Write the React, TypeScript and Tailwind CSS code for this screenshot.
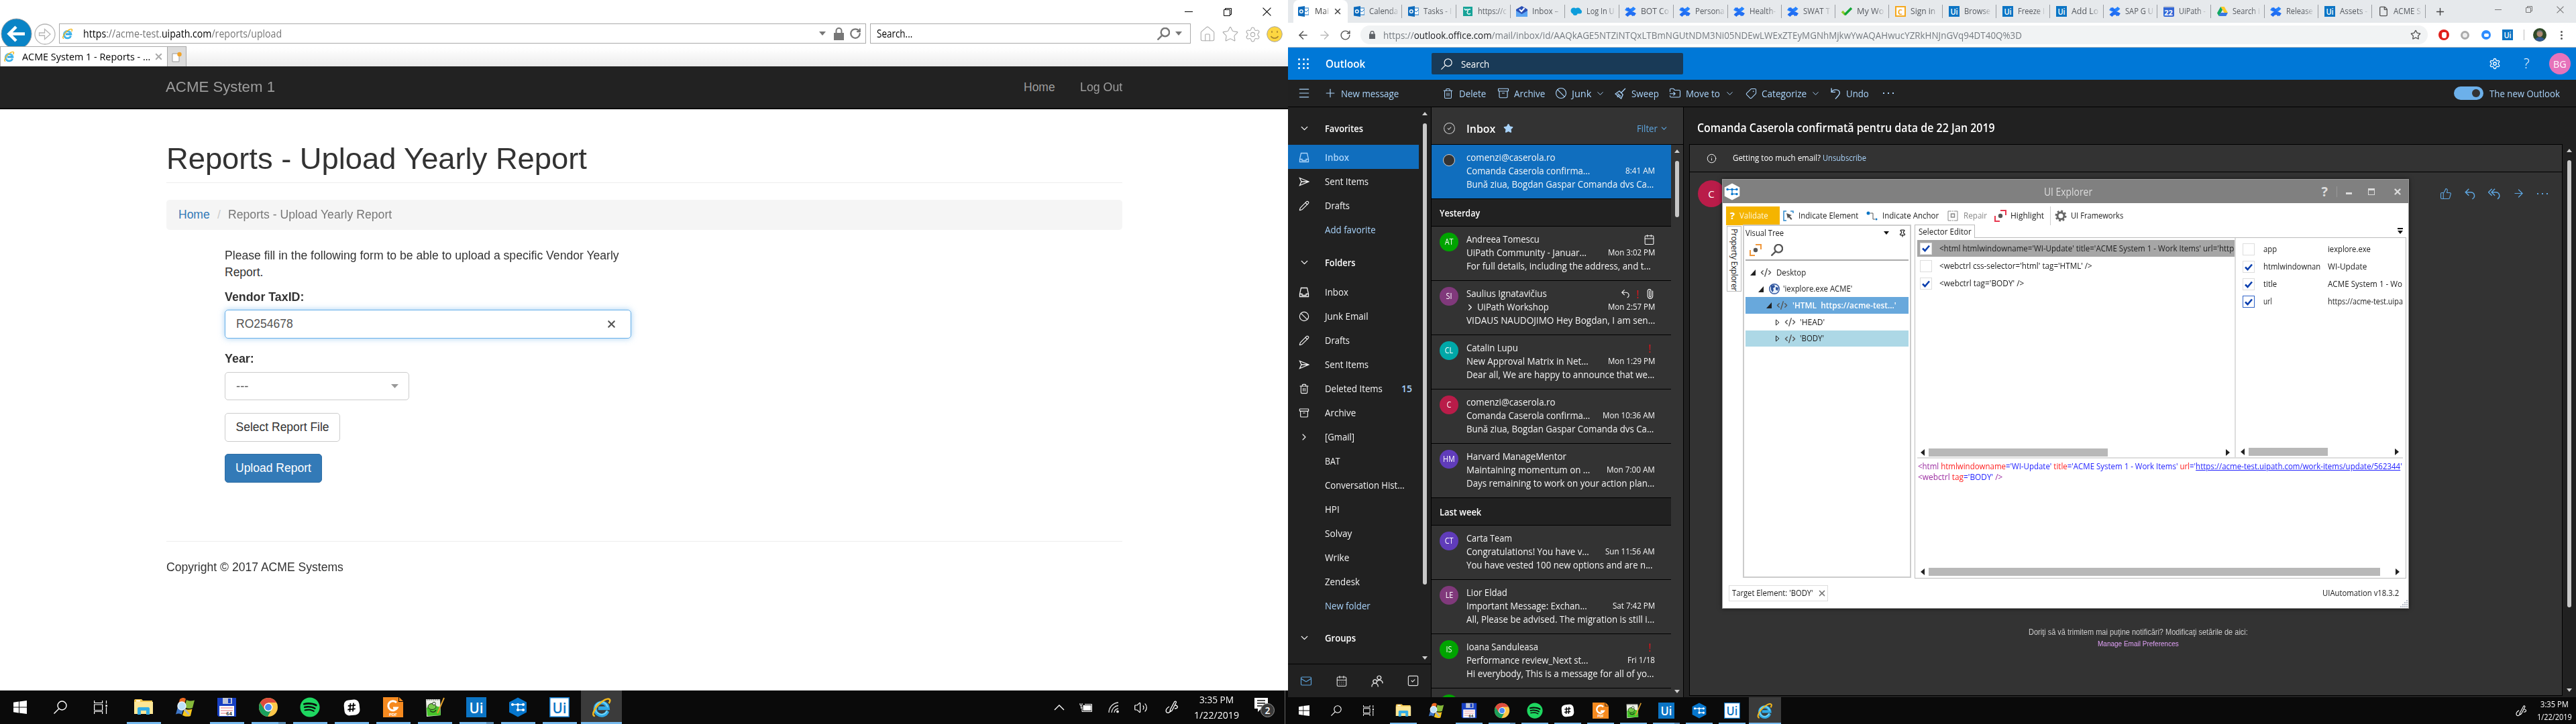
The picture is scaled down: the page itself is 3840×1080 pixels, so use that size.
import React, { useLayoutEffect, useRef, useState } from "react";
import {
  Settings, Archive, Ban, Trash2, ChevronDown, ChevronRight, Pencil,
  Star, RotateCw, ArrowLeft, ArrowRight, Plus, X, Menu, ThumbsUp, Tag,
  Calendar, CalendarDays, SquareCheck, Mail, Paperclip, Info, File, Volume2, CircleCheck,
  FolderInput, CodeXml, House, Pin,
} from "lucide-react";
import { FaSpotify, FaHashtag } from "react-icons/fa";

/* Text squeezed or stretched horizontally to an exact width. */
function Fit({ w, className = "", children }: { w: number; className?: string; children: React.ReactNode }) {
  const ref = useRef<HTMLSpanElement>(null);
  const [k, setK] = useState(1);
  useLayoutEffect(() => {
    if (ref.current) setK(w / ref.current.offsetWidth);
  }, [w]);
  return (
    <span className={"inline-block shrink-0 whitespace-pre " + className} style={{ width: w }}>
      <span ref={ref} className="inline-block origin-left whitespace-pre" style={{ transform: `scaleX(${k})` }}>
        {children}
      </span>
    </span>
  );
}

/* ---------- logos ---------- */
type S = { s: number };

const IELogo = ({ s }: S) => (
  <svg width={s} height={s} viewBox="0 0 32 32" fill="none" className="shrink-0">
    <path d="M25.5 21.5A9.8 9.8 0 1 1 26 17H11" stroke="#2fa9e6" strokeWidth="5.500" />
    <path d="M25 20.5A9.5 9.5 0 1 1 25.5 15.5" stroke="#7fdcfa" strokeWidth="1.600" />
    <path d="M6 29C1 29 3.500 20 10 13C17 5 27 0 29 4c.8 1.600-.2 3.500-1.500 5.500" stroke="#f3b81c" strokeWidth="2.600" />
  </svg>
);
const Windows = ({ s }: S) => (
  <svg width={s} height={s} viewBox="0 0 20 20" fill="#fff">
    <path d="M0 2.700 8 1.600V9.500H0zM9 1.400 20 0V9.500H9zM0 10.500H8V18.400L0 17.300zM9 10.500H20V20L9 18.600z" />
  </svg>
);
const Magnify = ({ s, c = "#fff", w = 1.4 }: { s: number; c?: string; w?: number }) => (
  <svg width={s} height={s} viewBox="0 0 20 20" fill="none" stroke={c} strokeWidth={w}>
    <circle cx="12.500" cy="7.500" r="6.500" />
    <path d="M8 12 .5 19.500" />
  </svg>
);
const TaskView = ({ s }: S) => (
  <svg width={s} height={s} viewBox="0 0 20 20" fill="none" stroke="#fff" strokeWidth="1.200">
    <path d="M.6 0v3.500h12V0M.6 6h12v8.500H.6zM.6 20v-3.500h12V20M18.500 0v4.500M18.500 10v10" />
    <rect x="17.300" y="6.500" width="2.600" height="2.600" fill="#fff" stroke="none" />
  </svg>
);
const Explorer = ({ s }: S) => (
  <svg width={s} height={s} viewBox="0 0 30 30">
    <path d="M1 5c0-1 .5-2 2-2h9l2 2h14v20H1z" fill="#f6c64c" />
    <path d="M1 7h28v18H1z" fill="#ffe796" />
    <path d="M4 4.500h6v2H4z" fill="#fff" />
    <path d="M6 26V17c0-1 .6-2 2-2h14c1.400 0 2 1 2 2v9h-5v-6h-8v6z" fill="#35aee6" />
  </svg>
);
const WinSearch = ({ s }: S) => (
  <svg width={s} height={s} viewBox="0 0 30 30">
    <path d="M7 3c4-3 7-2 9-.5L13 14c-3-1.500-6-2-9 0z" fill="#ee6a22" />
    <path d="M17 4c4 2 8 2 12 .5L26 16c-4 1.500-8 1-12-.5z" fill="#86b93a" />
    <path d="M4 15c3-2 6-1.500 9 0l-3 11c-3-2-6-2-9-.5z" fill="#3f77c8" />
    <path d="M14 17c4 2 8 2 11.500.5L23 28c-4 1.500-8 1-12-1z" fill="#f7c71c" />
    <circle cx="10" cy="13" r="6" fill="#bfe2fa" stroke="#e9f4fd" strokeWidth="1.500" />
    <path d="m14 18 7 8" stroke="#aab4bd" strokeWidth="3" />
  </svg>
);
const Floppy = ({ s }: S) => (
  <svg width={s} height={s} viewBox="0 0 30 30">
    <path d="M1 1h28v28H3l-2-2z" fill="#1740c4" />
    <path d="M9 1h14v9H9z" fill="#bfc6d6" />
    <path d="M17 2h4v7h-4z" fill="#1740c4" />
    <path d="M4 13h22v15H4z" fill="#fff" />
    <path d="M6 16h18M6 20h18M6 24h8" stroke="#f1b9bd" strokeWidth="2" />
    <text x="14" y="27" fontSize="7.500" fontWeight="700" fontFamily="Liberation Mono, monospace" fill="#222">64</text>
  </svg>
);
const Chrome = ({ s }: S) => (
  <svg width={s} height={s} viewBox="0 0 30 30">
    <circle cx="15" cy="15" r="14" fill="#fdc84a" />
    <path d="M15 15 2.900 8A14 14 0 0 1 27.100 8H15z" fill="#dd4b3e" />
    <path d="M2.900 8A14 14 0 0 0 14 29l6-11-5 3-6-3z" fill="#1a9f5c" />
    <path d="M2.900 8 9 18l3-9z" fill="#dd4b3e" />
    <circle cx="15" cy="15" r="6.400" fill="#fff" />
    <circle cx="15" cy="15" r="5" fill="#4a8af4" />
  </svg>
);
const Slack = ({ s }: S) => (
  <div className="flex h-[75%] w-[75%] -rotate-6 items-center justify-center rounded-[32%] bg-white text-black">
    <FaHashtag size={s * 0.48} />
  </div>
);
const Foxit = ({ s }: S) => (
  <svg width={s} height={s} viewBox="0 0 30 30">
    <path d="M0 0h23v7h7v23H0z" fill="#f68a1f" />
    <path d="M24 0l6 6h-6z" fill="#f68a1f" />
    <path d="M20 8a7 7 0 1 0 1 8h-6" fill="none" stroke="#fff" strokeWidth="3" />
    <text x="15" y="27.500" fontSize="6" fontWeight="700" textAnchor="middle" fontFamily="Liberation Sans, sans-serif" fill="#fff">PDF</text>
  </svg>
);
const Notepad = ({ s }: S) => (
  <svg width={s} height={s} viewBox="0 0 30 30">
    <path d="M2 3h21l1 24-21 2z" fill="#eef1e8" />
    <path d="M3 16c6-5 13-3 20-1l1 12-20 1z" fill="#46c52a" />
    <ellipse cx="11" cy="14" rx="6" ry="4.500" fill="#77c94a" stroke="#20381a" />
    <circle cx="14" cy="9.500" r="2.200" fill="#fff" stroke="#20381a" />
    <path d="M8 20c3 3 7 3 9-1" fill="none" stroke="#20381a" strokeWidth="1.500" />
    <path d="M3 4h19" stroke="#8c8c8c" strokeWidth="2" strokeDasharray="1.500 1.500" />
    <path d="M29 1 19 24" stroke="#e1a02c" strokeWidth="2" />
  </svg>
);
const UiBox = ({ s, inv = false }: { s: number; inv?: boolean }) => (
  <svg width={s} height={s} viewBox="0 0 30 30" className="shrink-0">
    <rect width="30" height="30" fill="#0b74c4" />
    {inv && <rect x="1.500" y="1.500" width="27" height="27" fill="#fff" />}
    <text x="15" y="23.500" fontSize="22" fontWeight="600" textAnchor="middle" fontFamily="Open Sans, sans-serif" fill={inv ? "#0b74c4" : "#fff"} textLength="21" lengthAdjust="spacingAndGlyphs">Ui</text>
  </svg>
);
const Hex = ({ s, inv = false }: { s: number; inv?: boolean }) => (
  <svg width={s} height={s} viewBox="0 0 30 30">
    <path d="M15 .5 28 7.500v15L15 29.500 2 22.500v-15z" fill={inv ? "#fff" : "#0676cd"} />
    <g stroke={inv ? "#0676cd" : "#fff"} fill={inv ? "#0676cd" : "#fff"} strokeWidth="1.500">
      <path d="M6 11h17M15 11v8h8" fill="none" />
      <circle cx="7" cy="11" r="1.300" /><circle cx="15" cy="11" r="1.300" /><circle cx="23" cy="11" r="1.300" />
      <circle cx="15" cy="19" r="1.300" /><circle cx="23" cy="19" r="1.300" />
    </g>
  </svg>
);
const Pen = ({ s }: S) => (
  <svg width={s} height={s} viewBox="0 0 20 20" fill="none" stroke="#fff" strokeWidth="1.300">
    <path d="M14 1.500c1.500-1 3 0 2 2L10 15l-3 2 .5-3.500zM6 9c-4 2-6 6-4 8.500 2 2 5 .5 6-3M15 7c5 1 4 5-1 5" />
  </svg>
);

/* ---------- Outlook glyphs, 16px grid ---------- */
const Glyph = ({ s = 16, d }: { s?: number; d: string }) => (
  <svg width={s} height={s} viewBox="0 0 16 16" fill="none" stroke="currentColor" strokeWidth="1.300" className="shrink-0"><path d={d} /></svg>
);
const TRAY = "M3.500 1.500h9l2 9v4h-13v-4zM1.500 10.500h3.500v2h6v-2h3.500";
const SEND = "M1.500 2.500 15 8 1.500 13.500 4 8zM4 8h11";
const REPLY = "M6.500 1.500 2 6l4.500 4.500M2 6h6.500c6 0 7 6.500 2.500 9";
const REPLY_ALL = "M5 1.500.500 6 5 10.500M9 1.500 4.500 6 9 10.500M4.500 6H10c5.500 0 6.500 6.500 2.500 9";
const UNDO = "M2 .500V6h5.500M2 6c2.500-4.500 11-4.500 11.500 1 0 3-4 6-6 8.500";
const SWEEP = "M15 1 9.500 6.500M6.500 4.500l5 5L9 15 1 8.500zM4 8l4.500 4M3.500 13l2-2";
const PEOPLE = "M10.500 1a2.500 2.500 0 1 0 .1 0M5 6a2.500 2.500 0 1 0 .1 0M.8 15.500c0-6 8.400-6 8.400 0M7.500 8.500c2-3 7.500-2.500 7.700 2.500";

/* ---------- taskbar ---------- */
function Taskbar({ big = false }: { big?: boolean }) {
  const s = big ? 30 : 24;
  const apps = [
    { i: <Explorer s={s} />, u: 1 }, { i: <WinSearch s={s} />, u: 0 }, { i: <Floppy s={s} />, u: 1 },
    { i: <Chrome s={s} />, u: 2 }, { i: <FaSpotify size={s} color="#1ed760" />, u: 1 }, { i: <Slack s={s} />, u: 1 },
    { i: <Foxit s={s} />, u: 1 }, { i: <Notepad s={s} />, u: 1 }, { i: <UiBox s={s} />, u: 2 },
    { i: <Hex s={s} />, u: 1 }, { i: <UiBox s={s} inv />, u: 1 }, { i: <IELogo s={s + 1} />, u: 3 },
  ];
  const sys = big ? "w-[60px]" : "w-[48px]";
  return (
    <div className={"flex shrink-0 bg-[#0a0a0a] text-white " + (big ? "h-[50px]" : "h-[40px]")}>
      <div className={"flex items-center justify-center " + sys}><Windows s={big ? 20 : 16} /></div>
      <div className={"flex items-center justify-center " + sys}><Magnify s={big ? 20 : 16} /></div>
      <div className={"flex items-center justify-center " + sys}><TaskView s={big ? 20 : 16} /></div>
      <div className="w-[3px]" />
      {apps.map((a, k) => (
        <div key={k} className={"flex justify-center " + (big ? "w-[62px]" : "w-[49px]")}>
          <div className={"flex h-full flex-col items-center " + (a.u === 3 ? (big ? "w-[61px] bg-[#3b3b3b]" : "w-[48px] bg-[#3b3b3b]") : big ? "w-[51px]" : "w-[40px]")}>
            <div className={"flex flex-1 items-center justify-center " + (big ? "w-[30px] pt-[3px]" : "w-[24px] pt-[2px]")}>
              <div className={"flex items-center justify-center " + (big ? "size-[30px]" : "size-[24px]")}>{a.i}</div>
            </div>
            <div className={"flex w-full justify-end " + (big ? "h-[3px] " : "h-[2px] ") + (a.u ? "bg-[#76b9ed]" : "")}>
              {a.u === 2 && <div className={big ? "w-[11px] bg-[#5a8cb5]" : "w-[8px] bg-[#5a8cb5]"} />}
            </div>
          </div>
        </div>
      ))}
      <div className="flex-1" />
      {big ? (
        <div className="flex items-center">
          <svg width="16" height="9" viewBox="0 0 16 9" fill="none" stroke="#fff" strokeWidth="1.400" className="mr-[22px]"><path d="m1 8 7-7 7 7" /></svg>
          <svg width="20" height="15" viewBox="0 0 20 15" className="mr-[23px]" fill="none" stroke="#fff"><path d="M4 6v7.500h14.500V2.500H8M1 1v3h3V1M2.500 4v5" /><rect x="6" y="4.500" width="11" height="7" fill="#fff" /></svg>
          <svg width="17" height="17" viewBox="0 0 17 17" fill="none" stroke="#ddd" strokeWidth="1.300" className="mr-[21px]"><path d="M1 16A15 15 0 0 1 15 1M5 16A11 11 0 0 1 15 5.500M9 16a7 7 0 0 1 6-6" /><circle cx="14" cy="14.500" r="1.300" fill="#fff" /></svg>
          <Volume2 size={21} strokeWidth={1.400} className="mr-[26px]" />
          <div className="mr-[22px]"><Pen s={20} /></div>
          <div className="flex w-[68px] flex-col items-center text-[15px] leading-[23px]">
            <Fit w={51}>3:35 PM</Fit>
            <Fit w={67}>1/22/2019</Fit>
          </div>
          <div className="relative mr-[17px] ml-[23px]">
            <svg width="28" height="30" viewBox="0 0 28 30"><path d="M0 1h20v16H10l-5 5v-5H0z" fill="#fff" /><path d="M4 5h12M4 9h12M4 13h8" stroke="#111" strokeWidth="1.300" /></svg>
            <div className="absolute top-[9px] left-[9px] flex size-[21px] items-center justify-center rounded-full border border-[#999] bg-[#3a3a3a] text-[14px] font-semibold">2</div>
          </div>
          <div className="h-full w-[5px] border-l border-[#666]" />
        </div>
      ) : (
        <div className="flex items-center pr-[5px]">
          <div className="mr-[14px]"><Pen s={17} /></div>
          <div className="flex w-[54px] flex-col items-center text-[12px] leading-[19px]">
            <Fit w={42}>3:35 PM</Fit>
            <Fit w={52}>1/22/2019</Fit>
          </div>
        </div>
      )}
    </div>
  );
}

/* ---------- left screen: Internet Explorer ---------- */
function AcmeWindow() {
  return (
    <div className="flex h-[1080px] w-[1920px] shrink-0 flex-col bg-white">
      <div className="flex h-[35px] items-center justify-end gap-[46px] pr-[25px]">
        <div className="h-px w-[12px] bg-black" />
        <svg width="12" height="12" viewBox="0 0 12 12" fill="none" stroke="#000"><path d="M.5 2.500h9v9h-9zM2.500 2.500v-2h9v9h-2" /></svg>
        <svg width="13" height="13" viewBox="0 0 12 12" stroke="#000"><path d="M.5.5l11 11M11.500.5l-11 11" /></svg>
      </div>
      <div className="flex h-[34px] items-start">
        <div className="flex h-[42px] w-[48px] shrink-0 -translate-y-[8px] overflow-hidden pl-[1px]">
          <svg width="47" height="47" viewBox="0 0 47 47"><circle cx="23.500" cy="23.500" r="22.500" fill="#0a84c6" stroke="#8d9aa3" /><path d="M36 23.500H13M23 13 12.500 23.500 23 34" fill="none" stroke="#fff" strokeWidth="4.500" /></svg>
        </div>
        <div className="flex w-[40px] pl-[3px]">
          <svg width="32" height="32" viewBox="0 0 32 32" fill="none" stroke="#b5b5b5" strokeWidth="1.300"><circle cx="16" cy="16" r="15" /><path d="M7.500 14h8V8.500L24 16l-8.500 7.500V18h-8z" /></svg>
        </div>
        <div className="flex h-[30px] w-[1203px] items-center border border-[#aaa] pl-[3px]">
          <IELogo s={17} />
          <Fit w={296} className="ml-[15px] text-[16px] text-[#777]"><span className="text-black">https</span>://acme-test.<span className="text-black">uipath.com</span>/reports/upload</Fit>
          <div className="flex-1" />
          <svg width="10" height="6" className="mr-[12px]"><path d="M0 0h10L5 6z" fill="#777" /></svg>
          <svg width="15" height="19" viewBox="0 0 15 19" className="mr-[8px]"><path d="M0 8h15v11H0z" fill="#777" /><path d="M3.500 9V5a4 4 0 0 1 8 0v4" fill="none" stroke="#777" strokeWidth="2" /></svg>
          <RotateCw size={18} strokeWidth={3} color="#777" className="mr-[6px]" />
        </div>
        <div className="ml-[6px] flex h-[30px] w-[478px] items-center border border-[#aaa] pr-[12px] pl-[9px]">
          <Fit w={53} className="text-[16px] text-black">Search...</Fit>
          <div className="flex-1" />
          <div className="mr-[8px]"><Magnify s={19} c="#777" w={2.6} /></div>
          <svg width="10" height="6"><path d="M0 0h10L5 6z" fill="#777" /></svg>
        </div>
        <div className="ml-[12px] flex h-[32px] items-center gap-[8px] text-[#aaa]">
          <House size={26} strokeWidth={1} /><Star size={26} strokeWidth={1} /><Settings size={25} strokeWidth={1} />
          <svg width="24" height="24" viewBox="0 0 24 24"><circle cx="12" cy="12" r="11.300" fill="#fdd641" stroke="#a5a5a5" /><path d="M8 7v3M16 7v3M6.500 15c2.500 4 8.500 4 11 0" stroke="#a8832c" strokeWidth="1.500" fill="none" /></svg>
        </div>
      </div>
      <div className="relative flex h-[30px] bg-linear-to-b from-white from-10% to-[#ebebeb]">
        <div className="flex w-[250px] items-center border border-b-0 border-[#aaa] bg-white pl-[4px]">
          <IELogo s={17} />
          <Fit w={191} className="ml-[11px] text-[15px] text-black">ACME System 1 - Reports - ...</Fit>
          <X size={15} strokeWidth={3} color="#aaa" className="ml-[5px]" />
        </div>
        <div className="flex w-[28px] items-center justify-center border border-b-0 border-l-0 border-[#aaa] bg-[#dcdcdc]">
          <svg width="15" height="16" viewBox="0 0 15 16"><path d="M1 3h10v12H1z" fill="#fff" stroke="#999" /><circle cx="11.500" cy="4" r="3.200" fill="#f0a32a" /></svg>
        </div>
      </div>
      <div className="flex h-[64px] shrink-0 items-center border-b-2 border-[#080808] bg-[#222] pr-[247px] pl-[247px] font-['Liberation_Sans',Arial,sans-serif] text-[#9d9d9d]">
        <Fit w={163} className="text-[22.5px]">ACME System 1</Fit>
        <div className="flex-1" />
        <Fit w={47} className="mr-[37px] text-[17.5px]">Home</Fit>
        <Fit w={63} className="text-[17.5px]">Log Out</Fit>
      </div>
      <div className="flex flex-1 flex-col pr-[247px] pl-[248px] font-['Liberation_Sans',Arial,sans-serif] text-[17.5px] leading-[25px] text-[#333]">
        <div className="mt-[45px] flex h-[65px] items-center border-b border-[#eee]">
          <Fit w={627} className="relative -top-[3px] text-[45px] leading-[50px]">Reports - Upload Yearly Report</Fit>
        </div>
        <div className="mt-[25px] flex h-[45px] items-center rounded-[5px] bg-[#f5f5f5] pl-[18px]">
          <Fit w={47} className="text-[#337ab7]">Home</Fit>
          <span className="mx-[11px] w-[5px] text-[#ccc]">/</span>
          <Fit w={244} className="text-[#777]">Reports - Upload Yearly Report</Fit>
        </div>
        <div className="flex flex-col items-start pl-[87px]">
          <Fit w={588} className="mt-[26px]">Please fill in the following form to be able to upload a specific Vendor Yearly</Fit>
          <Fit w={57}>Report.</Fit>
          <Fit w={118} className="mt-[12px] font-bold">Vendor TaxID:</Fit>
          <div className="mt-[6px] flex h-[43px] w-[606px] items-center justify-between rounded-[5px] border border-[#66afe9] pr-[20px] pl-[16px] text-[#555] shadow-[0_0_10px_rgba(102,175,233,.6)]">
            <Fit w={85}>RO254678</Fit>
            <X size={17} strokeWidth={3} />
          </div>
          <Fit w={44} className="mt-[18px] font-bold">Year:</Fit>
          <div className="mt-[7px] flex h-[42px] w-[275px] items-center justify-between rounded-[5px] border border-[#ccc] pr-[15px] pl-[16px] text-[#555]">
            <Fit w={18}>---</Fit>
            <svg width="11" height="6"><path d="M0 0h11L5.500 6z" fill="#999" /></svg>
          </div>
          <div className="mt-[19px] flex h-[43px] w-[172px] items-center justify-center rounded-[5px] border border-[#ccc]"><Fit w={139}>Select Report File</Fit></div>
          <div className="mt-[18px] flex h-[43px] w-[145px] items-center justify-center rounded-[5px] border border-[#2e6da4] bg-[#337ab7] text-white"><Fit w={113}>Upload Report</Fit></div>
        </div>
        <div className="mt-[87px] border-t border-[#eee] pt-[26px]"><Fit w={264}>Copyright © 2017 ACME Systems</Fit></div>
      </div>
      <Taskbar big />
    </div>
  );
}

/* ---------- right screen: Chrome ---------- */
const OutlookFav = () => (
  <svg width="16" height="16" viewBox="0 0 16 16" className="shrink-0"><path d="M8 3h8v10H8z" fill="#fff" stroke="#0f6cbd" /><path d="m9 6 3 3 4-4" stroke="#0f6cbd" fill="none" /><path d="M0 1.500 10 0v16L0 14.500z" fill="#0f6cbd" /><circle cx="4.800" cy="8" r="2.300" fill="none" stroke="#fff" strokeWidth="1.400" /></svg>
);
const Confluence = () => (
  <svg width="17" height="17" viewBox="0 0 17 17" fill="none" strokeWidth="5"><path d="M1.500 4c5 3.500 9 3.500 13-1.500" stroke="#2684ff" /><path d="M15.500 13c-5-3.500-9-3.500-13 1.500" stroke="#1f6cf0" /><path d="m4 3 9 11" stroke="#2371f5" strokeWidth="4" /></svg>
);
const tabIcon: Record<string, React.ReactNode> = {
  o: <OutlookFav />,
  c: <Confluence />,
  u: <UiBox s={16} />,
  y: <svg width="14" height="14" viewBox="0 0 14 14"><path d="M0 0h14v14H0z" fill="#17a398" /><path d="M2 3c2 3 4 2 4 0M11 4c-3-1-5 1-4 4M6 8c0 3 3 4 5 2" stroke="#fff" fill="none" strokeWidth="1.500" /></svg>,
  i: <svg width="17" height="16" viewBox="0 0 17 16"><path d="M0 5 8.500 0 17 5v11H0z" fill="#2a4fb5" /><path d="M0 7l8.500 5L17 7v9H0z" fill="#5aa5f4" /><path d="m5 5 3 3 4.500-5" stroke="#fff" strokeWidth="2" fill="none" /></svg>,
  s: <svg width="17" height="12" viewBox="0 0 17 12" fill="#0d9ddb"><circle cx="5" cy="5" r="4.500" /><circle cx="11" cy="5" r="4.500" /><circle cx="14" cy="6.500" r="3" /><circle cx="7" cy="8.500" r="3.500" /></svg>,
  m: <svg width="16" height="13" viewBox="0 0 16 13" fill="none" strokeWidth="3.500"><path d="m1 6 5 5" stroke="#8ccb29" /><path d="m5 11 10-10" stroke="#12a637" /></svg>,
  g: <div className="flex size-[16px] items-center justify-center border-2 border-[#f5a81c] bg-white text-[11px] leading-none font-bold text-[#f5a81c]">C</div>,
  d: <div className="flex size-[16px] items-center justify-center rounded-xs border-t-2 border-[#c2c8d4] bg-[#3367d6] text-[11px] leading-none font-bold text-white">22</div>,
  v: <svg width="16" height="14" viewBox="0 0 16 14"><path d="M5.300 0h5.400L16 9h-5.400z" fill="#ffc928" /><path d="M5.300 0 0 9.500 2.700 14 8 4.700z" fill="#11a861" /><path d="M16 9l-2.700 5H2.700l2.600-5z" fill="#3777e3" /></svg>,
  f: <File size={16} strokeWidth={2} color="#555" />,
};
const tabs: [string, string, number][] = [
  ["o", "Calenda", 43], ["o", "Tasks - I", 42], ["y", "https://c", 43], ["i", "Inbox – ", 42], ["s", "Log In U", 42], ["c", "BOT Co", 42], ["c", "Persona", 44],
  ["c", "Health-", 39], ["c", "SWAT T", 40], ["m", "My Wo", 40], ["g", "Sign in ", 40], ["u", "Browse", 39], ["u", "Freeze I", 40], ["u", "Add Lo", 40],
  ["c", "SAP G U", 42], ["d", "UiPath -", 40], ["v", "Search i", 41], ["c", "Release", 40], ["u", "Assets -", 41], ["f", "ACME S", 41],
];

function ChromeHeader() {
  return (
    <div className="flex h-[71px] shrink-0 flex-col border-b border-[#b9bcc0] bg-white">
      <div className="flex h-[34px] items-center bg-[#e6e9ec] pl-[8px]">
        <div className="flex h-full w-[81px] items-center rounded-t-lg bg-white pl-[7px]">
          <OutlookFav />
          <Fit w={21} className="ml-[9px] [mask-image:linear-gradient(to_right,black_70%,rgba(0,0,0,.2))] text-[13px] text-[#444]">Mai</Fit>
          <X size={14} strokeWidth={2.500} color="#444" className="ml-[6px] shrink-0" />
        </div>
        {tabs.map(([ic, t, w], k) => (
          <div key={k} className={"flex h-[20px] shrink-0 items-center border-r pl-[8px] " + (k < 7 ? "w-[81px] border-[#9b9ea2]" : "w-[80px] border-[#9b9ea2]")}>
            <div className="mr-[7px] flex w-[17px] justify-center">{tabIcon[ic]}</div>
            <Fit w={w} className="[mask-image:linear-gradient(to_right,black_70%,rgba(0,0,0,.15))] text-[13px] text-[#55595f]">{t}</Fit>
          </div>
        ))}
        <Plus size={17} strokeWidth={2} color="#444" className="ml-[13px]" />
        <div className="flex-1" />
        <div className="mr-[18px] mb-[6px] flex items-center gap-[36px]">
          <div className="h-px w-[10px] bg-[#777]" />
          <svg width="10" height="10" viewBox="0 0 10 10" fill="none" stroke="#777"><path d="M.5 2.500h7v7h-7zM2.500 2.500v-2h7v7h-2" /></svg>
          <svg width="11" height="11" viewBox="0 0 10 10" stroke="#777"><path d="M.5.5l9 9M9.500.5l-9 9" /></svg>
        </div>
      </div>
      <div className="flex h-[36px] items-center pl-[13px] text-[#555]">
        <ArrowLeft size={19} className="mr-[13px]" /><ArrowRight size={19} color="#bbb" className="mr-[13px]" /><RotateCw size={17} />
        <div className="ml-[14px] flex h-[28px] w-[1591px] items-center rounded-full bg-[#f1f3f4] pl-[13px]">
          <svg width="9" height="12" viewBox="0 0 9 12"><path d="M0 4.500h9V12H0z" fill="#5f6368" /><path d="M2 5V3a2.500 2.500 0 0 1 5 0v2" fill="none" stroke="#5f6368" strokeWidth="1.400" /></svg>
          <Fit w={952} className="ml-[12px] text-[14px] text-[#757b80]">https://<span className="text-[#202124]">outlook.office.com</span>/mail/inbox/id/AAQkAGE5NTZiNTQxLTBmNGUtNDM3Ni05NDEwLWExZTEyMGNhMjkwYwAQAHwucYZRkHNJnGVq94DT40Q%3D</Fit>
          <div className="flex-1" />
          <Star size={16} className="mr-[10px]" />
        </div>
        <div className="ml-[16px] flex size-[16px] items-center justify-center rounded-full bg-[#e0201b]"><div className="h-[9px] w-[7px] rounded-t-sm rounded-b-md bg-white" /></div>
        <div className="ml-[17px] size-[13px] rounded-full border-3 border-[#aaa] bg-[#eee]" />
        <div className="ml-[18px] flex size-[14px] items-center justify-center rounded-full bg-[#2d8cff]"><div className="h-[5px] w-[7px] rounded-xs bg-white" /></div>
        <div className="ml-[17px]"><UiBox s={16} /></div>
        <div className="ml-[16px] h-[16px] w-px bg-[#bbb]" />
        <svg width="20" height="20" viewBox="0 0 20 20" className="ml-[13px]"><circle cx="10" cy="10" r="10" fill="#2f4a28" /><circle cx="10" cy="8.500" r="4.500" fill="#b08a74" /><path d="M5.500 7C6 2 14 2 14.500 7 12 5 8 5 5.500 7z" fill="#77777a" /><path d="M3 17c3-5 11-5 14 0a10 10 0 0 1-14 0z" fill="#33588f" /></svg>
        <div className="ml-[21px] flex flex-col gap-[2px]"><i className="size-[3px] rounded-full bg-[#555]" /><i className="size-[3px] rounded-full bg-[#555]" /><i className="size-[3px] rounded-full bg-[#555]" /></div>
      </div>
    </div>
  );
}

/* ---------- Outlook ---------- */
function OutlookBars() {
  return (
    <>
      <div className="flex h-[48px] shrink-0 items-center bg-[#0078d7] text-white">
        <div className="grid w-[56px] grid-cols-[3px_3px_3px] gap-[3.500px] pl-[15px]">
          {Array.from({ length: 9 }, (_, k) => <i key={k} className="size-[3px] rounded-full bg-white" />)}
        </div>
        <Fit w={59} className="text-[16px] font-semibold">Outlook</Fit>
        <div className="ml-[99px] flex h-[32px] w-[375px] items-center rounded-xs bg-[#193a57] pl-[14px]">
          <Magnify s={17} />
          <Fit w={42} className="ml-[13px] text-[14px]">Search</Fit>
        </div>
        <div className="flex-1" />
        <Settings size={18} strokeWidth={1.800} />
        <span className="mr-[28px] ml-[34px] w-[10px] text-[20px] font-light">?</span>
        <div className="mr-[8px] flex size-[32px] items-center justify-center rounded-full bg-[#e673bb]"><Fit w={20} className="text-[15px]">BG</Fit></div>
      </div>
      <div className="flex h-[41px] shrink-0 items-center border-b border-black bg-[#212121] text-[14px] text-[#a9d3fa]">
        <Menu size={20} strokeWidth={1.400} className="mr-[19px] ml-[14px]" />
        <div className="flex w-[177px] items-center"><Plus size={20} strokeWidth={1.400} className="mr-[6px]" /><Fit w={86}>New message</Fit></div>
        <div className="flex w-[82px] items-center"><Trash2 size={17} strokeWidth={1.500} className="mr-[8px]" /><Fit w={40}>Delete</Fit></div>
        <div className="flex w-[86px] items-center"><Archive size={18} strokeWidth={1.500} className="mr-[7px]" /><Fit w={46}>Archive</Fit></div>
        <div className="flex w-[89px] items-center"><Ban size={18} strokeWidth={1.500} className="mr-[7px]" /><Fit w={29}>Junk</Fit><ChevronDown size={15} strokeWidth={1.500} className="ml-[6px]" /></div>
        <div className="flex w-[81px] items-center"><Glyph s={17} d={SWEEP} /><Fit w={41} className="ml-[8px]">Sweep</Fit></div>
        <div className="flex w-[114px] items-center"><FolderInput size={18} strokeWidth={1.500} className="mr-[7px]" /><Fit w={51}>Move to</Fit><ChevronDown size={15} strokeWidth={1.500} className="ml-[7px]" /></div>
        <div className="flex w-[126px] items-center"><Tag size={17} strokeWidth={1.500} className="mr-[7px] rotate-90" /><Fit w={67}>Categorize</Fit><ChevronDown size={15} strokeWidth={1.500} className="ml-[6px]" /></div>
        <div className="flex w-[79px] items-center"><Glyph s={17} d={UNDO} /><Fit w={34} className="ml-[7px]">Undo</Fit></div>
        <div className="flex gap-[5px]"><i className="size-[2px] bg-current" /><i className="size-[2px] bg-current" /><i className="size-[2px] bg-current" /></div>
        <div className="flex-1" />
        <div className="mr-[9px] flex h-[20px] w-[44px] items-center justify-end rounded-full bg-[#6cb0ea] pr-[5px]"><div className="size-[12px] rounded-full bg-[#333]" /></div>
        <Fit w={105} className="mr-[24px]">The new Outlook</Fit>
      </div>
    </>
  );
}

const Up = () => <svg width="8" height="5" className="shrink-0"><path d="M0 5h8L4 0z" fill="#d0d0d0" /></svg>;
const Down = () => <svg width="8" height="5" className="shrink-0"><path d="M0 0h8L4 5z" fill="#d0d0d0" /></svg>;

function Folder({ icon, t, w, n, cls = "" }: { icon?: React.ReactNode; t: string; w: number; n?: string; cls?: string }) {
  return (
    <div className={"flex h-[36px] w-[195px] shrink-0 items-center pt-px " + cls}>
      <div className="flex w-[55px] pl-[16px]">{icon}</div>
      <Fit w={w}>{t}</Fit>
      {n && <span className="ml-auto pr-[10px] font-semibold text-[#a9d3fa]">{n}</span>}
    </div>
  );
}
function FolderHead({ t, w }: { t: string; w: number }) {
  return (
    <div className="flex h-[37px] shrink-0 items-center font-semibold text-white">
      <div className="w-[55px] pl-[16px]"><ChevronDown size={17} strokeWidth={1.800} /></div>
      <Fit w={w}>{t}</Fit>
    </div>
  );
}
const ic = { size: 16, strokeWidth: 1.700 };

function Sidebar() {
  return (
    <div className="flex w-[214px] shrink-0 flex-col border-r border-black bg-[#212121] text-[14px] text-[#f4f4f4]">
      <div className="flex h-[831px] border-b border-black">
        <div className="flex w-[199px] flex-col overflow-hidden pt-[13px]">
          <FolderHead t="Favorites" w={57} />
          <Folder icon={<Glyph d={TRAY} />} t="Inbox" w={36} cls="mt-[6px] bg-[#106ebe] font-semibold text-[#a9d3fa]" />
          <Folder icon={<Glyph d={SEND} />} t="Sent Items" w={65} />
          <Folder icon={<Pencil {...ic} />} t="Drafts" w={37} />
          <Folder t="Add favorite" w={76} cls="text-[#a9d3fa] mb-[13px]" />
          <FolderHead t="Folders" w={46} />
          <Folder icon={<Glyph d={TRAY} />} t="Inbox" w={35} cls="mt-[7px]" />
          <Folder icon={<Ban {...ic} />} t="Junk Email" w={65} />
          <Folder icon={<Pencil {...ic} />} t="Drafts" w={37} />
          <Folder icon={<Glyph d={SEND} />} t="Sent Items" w={65} />
          <Folder icon={<Trash2 {...ic} />} t="Deleted Items" w={86} n="15" />
          <Folder icon={<Archive {...ic} />} t="Archive" w={46} />
          <Folder icon={<ChevronRight {...ic} />} t="[Gmail]" w={44} />
          <Folder t="BAT" w={23} />
          <Folder t="Conversation Hist..." w={119} />
          <Folder t="HPI" w={22} />
          <Folder t="Solvay" w={40} />
          <Folder t="Wrike" w={36} />
          <Folder t="Zendesk" w={52} />
          <Folder t="New folder" w={68} cls="text-[#a9d3fa] mb-[12px]" />
          <FolderHead t="Groups" w={46} />
          <Folder t=" All Hands" w={56} n="2" cls="mt-[7px]" />
        </div>
        <div className="flex w-[10px] flex-col items-center pt-[7px] pb-[6px]">
          <Up />
          <div className="mt-[12px] h-[688px] w-[6px] rounded-full bg-[#c8c8c8]" />
          <div className="flex-1" />
          <Down />
        </div>
      </div>
      <div className="flex flex-1 items-center gap-[35px] pl-[18px] text-[#ddd]">
        <Mail size={18} strokeWidth={1.500} color="#5ea6e0" /><CalendarDays size={18} strokeWidth={1.500} /><Glyph s={18} d={PEOPLE} /><SquareCheck size={19} strokeWidth={1.500} />
      </div>
    </div>
  );
}

type M = { a: string; c: string; n: [string, number]; s: [string, number]; d: [string, number]; p: [string, number]; x?: React.ReactNode; thread?: boolean };
const bang = <span className="w-[16px] text-center text-[17px] leading-none text-[#d3161c]">!</span>;
const yesterday: M[] = [
  { a: "AT", c: "bg-[#00a400]", n: ["Andreea Tomescu", 109], s: ["UiPath Community - Januar...", 179], d: ["Mon 3:02 PM", 70], p: ["For full details, including the address, and t...", 275], x: <Calendar size={17} strokeWidth={1.500} /> },
  { a: "SI", c: "bg-[#80397b]", n: ["Saulius Ignatavičius", 120], s: ["UiPath Workshop", 107], d: ["Mon 2:57 PM", 70], p: ["VIDAUS NAUDOJIMO Hey Bogdan, I am sen...", 281], x: <><Glyph s={14} d={REPLY} /><span className="w-[3px]" />{bang}<Paperclip size={15} strokeWidth={1.800} className="ml-[3px] -rotate-45" /></>, thread: true },
  { a: "CL", c: "bg-[#00a8a8]", n: ["Catalin Lupu", 77], s: ["New Approval Matrix in Net...", 182], d: ["Mon 1:29 PM", 70], p: ["Dear all, We are happy to announce that we...", 280], x: bang },
  { a: "C", c: "bg-[#b91c49]", n: ["comenzi@caserola.ro", 132], s: ["Comanda Caserola confirma...", 184], d: ["Mon 10:36 AM", 78], p: ["Bună ziua, Bogdan Gaspar Comanda dvs Ca...", 279] },
  { a: "HM", c: "bg-[#603cba]", n: ["Harvard ManageMentor", 149], s: ["Maintaining momentum on ...", 184], d: ["Mon 7:00 AM", 72], p: ["Days remaining to work on your action plan...", 280] },
];
const lastWeek: M[] = [
  { a: "CT", c: "bg-[#603cba]", n: ["Carta Team", 68], s: ["Congratulations! You have v...", 183], d: ["Sun 11:56 AM", 74], p: ["You have vested 100 new options and are n...", 278] },
  { a: "LE", c: "bg-[#80397b]", n: ["Lior Eldad", 61], s: ["Important Message: Exchan...", 180], d: ["Sat 7:42 PM", 63], p: ["All, Please be advised. The migration is still i...", 280] },
  { a: "IS", c: "bg-[#00a400]", n: ["Ioana Sanduleasa", 107], s: ["Performance review_Next st...", 181], d: ["Fri 1/18", 41], p: ["Hi everybody, This is a message for all of yo...", 279], x: bang },
];
function MailRow({ m, sel = false }: { m: M; sel?: boolean }) {
  return (
    <div className={"flex h-[81px] shrink-0 border-b border-black pt-[9px] pl-[12px] text-[#f6f6f6] " + (sel ? "bg-[#106ebe]" : "")}>
      <div className="mr-[12px] w-[28px]">
        {sel ? <div className="mt-[5px] ml-[5px] size-[18px] rounded-full border border-[#ccc] bg-[#333]" /> :
          <div className={"flex size-[28px] items-center justify-center rounded-full text-[12px] text-white " + m.c}><span className="scale-x-90">{m.a}</span></div>}
      </div>
      <div className="w-[281px] text-[14px] leading-[20px]">
        <div className="flex h-[20px] items-center justify-between"><Fit w={m.n[1]}>{m.n[0]}</Fit><span className="flex items-center">{m.x}</span></div>
        <div className="flex h-[20px] items-center">
          {m.thread && <ChevronRight size={15} className="mr-[3px] -ml-[2px]" />}
          <Fit w={m.s[1]}>{m.s[0]}</Fit><div className="flex-1" /><Fit w={m.d[1]} className="text-[12.500px]">{m.d[0]}</Fit>
        </div>
        <Fit w={m.p[1]}>{m.p[0]}</Fit>
      </div>
    </div>
  );
}
const Group = ({ t, w }: { t: string; w: number }) => (
  <div className="flex h-[41px] shrink-0 items-center border-b border-black bg-[#212121] pl-[12px] text-[14px] font-semibold text-white"><Fit w={w}>{t}</Fit></div>
);

function MailList() {
  return (
    <div className="flex w-[376px] shrink-0 flex-col border-r border-black bg-[#333]">
      <div className="flex h-[56px] shrink-0 items-center border-b border-black pt-[8px] pl-[17px] text-white">
        <CircleCheck size={19} strokeWidth={1.300} color="#ccc" />
        <Fit w={43} className="ml-[16px] text-[17px] font-semibold">Inbox</Fit>
        <Star size={15} fill="#a9d3fa" color="#a9d3fa" className="ml-[12px]" />
        <div className="flex-1" />
        <Fit w={31} className="text-[14px] text-[#5ea6e0]">Filter</Fit>
        <ChevronDown size={13} color="#5ea6e0" className="mr-[22px] ml-[3px]" />
      </div>
      <div className="flex h-[824px] overflow-hidden">
        <div className="flex w-[357px] flex-col">
          <MailRow sel m={{ a: "", c: "", n: ["comenzi@caserola.ro", 132], s: ["Comanda Caserola confirma...", 184], d: ["8:41 AM", 44], p: ["Bună ziua, Bogdan Gaspar Comanda dvs Ca...", 279] }} />
          <Group t="Yesterday" w={60} />
          {yesterday.map((m) => <MailRow key={m.a} m={m} />)}
          <Group t="Last week" w={62} />
          {lastWeek.map((m) => <MailRow key={m.a} m={m} />)}
          <div className="pt-[9px] pl-[12px]"><div className="size-[28px] rounded-full bg-[#00a400]" /></div>
        </div>
        <div className="flex w-[18px] flex-col items-center pt-[7px] pb-[6px]">
          <Up /><div className="mt-[12px] h-[84px] w-[6px] rounded-full bg-[#c8c8c8]" /><div className="flex-1" /><Down />
        </div>
      </div>
    </div>
  );
}

/* ---------- UI Explorer ---------- */
const Check = ({ on, blue = false }: { on: boolean; blue?: boolean }) => (
  <div className={"flex size-[18px] shrink-0 items-center justify-center border bg-white " + (blue ? "border-[#2f63c8]" : "border-[#ddd]")}>
    {on && <svg width="12" height="11" viewBox="0 0 12 11"><path d="M1 5.500 4.500 9 11 1.500" fill="none" stroke="#0b3fae" strokeWidth="2.600" /></svg>}
  </div>
);
const LeftTri = () => <svg width="6" height="10"><path d="M6 0v10L0 5z" fill="#222" /></svg>;
const RightTri = () => <svg width="6" height="10"><path d="M0 0v10l6-5z" fill="#222" /></svg>;
const Open = () => <svg width="8" height="9"><path d="M8 0v9H0z" fill="#222" /></svg>;
const Closed = () => <svg width="8" height="10" fill="none" stroke="#222"><path d="M1.500 1v8L6 5z" /></svg>;
const Target = ({ c }: { c: string }) => (
  <svg width="18" height="18" viewBox="0 0 18 18" fill="none" stroke={c} strokeWidth="2"><path d="M9 1h8v7M1 9v8h7" /><circle cx="9" cy="9" r="3.200" fill="#555" stroke="none" /></svg>
);
const Scroll = ({ thumb, end }: { thumb: string; end: string }) => (
  <div className={"flex h-[12px] items-center " + end}><LeftTri /><div className={"ml-[6px] h-[12px] bg-[#b8b8b8] " + thumb} /><div className="flex-1" /><RightTri /></div>
);

function UIExplorer() {
  return (
    <div className="absolute top-[267px] left-[647px] flex h-[641px] w-[1024px] flex-col border border-[#999] bg-white text-[13px] text-[#1c1c1c] shadow-[0_0_6px_rgba(0,0,0,.6)]">
      <div className="flex h-[35px] shrink-0 items-center bg-[#808080] text-[#dcdcdc]">
        <div className="ml-[1px]"><Hex s={26} inv /></div>
        <Fit w={72} className="ml-[452px] text-[16px]">UI Explorer</Fit>
        <div className="flex-1" />
        <span className="text-[20px] font-bold">?</span>
        <div className="ml-[13px] h-[16px] w-px bg-[#999]" />
        <div className="mt-[6px] ml-[13px] h-[3px] w-[9px] bg-[#dcdcdc]" />
        <div className="ml-[24px] h-[10px] w-[10px] border border-t-3 border-[#dcdcdc]" />
        <X size={14} strokeWidth={4} className="mr-[9px] ml-[27px]" />
      </div>
      <div className="flex h-[31px] shrink-0 items-center pt-[6px] pl-[5px]">
        <div className="mr-[5px] flex h-[28px] w-[80px] items-center bg-[#f5b400] text-[#fff7dc]"><span className="ml-[6px] w-[14px] text-[15px] font-bold text-white">?</span><Fit w={43}>Validate</Fit></div>
        <svg width="16" height="16" viewBox="0 0 16 16"><path d="M5 1H1v14h4M11 1h4v3" fill="none" stroke="#2d88cc" strokeWidth="1.500" /><path d="M5 4l8 3-3 1.500 3.500 4-1.500 1.500-3.500-4L7 12z" fill="#555" /></svg>
        <Fit w={89} className="ml-[7px]">Indicate Element</Fit>
        <svg width="17" height="14" viewBox="0 0 17 14" className="ml-[12px]"><circle cx="3" cy="3" r="2.500" fill="#0b74c4" /><path d="M6 3h4v9h3" fill="none" stroke="#555" /><circle cx="15" cy="12" r="1.500" fill="#0b74c4" /></svg>
        <Fit w={84} className="ml-[7px]">Indicate Anchor</Fit>
        <svg width="16" height="16" viewBox="0 0 16 16" className="ml-[13px]" fill="none" stroke="#888"><path d="M4 1H1v14h3M12 1h3v14h-3" /><path d="M4 1h8M4 15h8" strokeDasharray="2 1" /><rect x="5.500" y="5" width="5" height="5" strokeWidth="1.500" /></svg>
        <Fit w={35} className="ml-[8px] text-[#888]">Repair</Fit>
        <div className="ml-[11px]"><Target c="#e8384f" /></div>
        <Fit w={50} className="ml-[6px]">Highlight</Fit>
        <div className="mr-[6px] ml-[9px] h-[28px] w-px bg-[#ccc]" />
        <svg width="18" height="18" viewBox="0 0 18 18"><circle cx="9" cy="9" r="5" fill="none" stroke="#666" strokeWidth="3" /><circle cx="9" cy="9" r="7.300" fill="none" stroke="#666" strokeWidth="2.400" strokeDasharray="2.870 2.870" /></svg>
        <Fit w={78} className="ml-[6px]">UI Frameworks</Fit>
      </div>
      <div className="flex h-[529px] shrink-0 pl-[6px]">
        <div className="mt-[3px] mr-[2px] flex h-[98px] w-[22px] shrink-0 items-center border border-[#bbb] pt-[3px]">
          <span className="text-[12px] leading-[20px] tracking-[-0.35px] whitespace-nowrap [writing-mode:vertical-rl]">Property Explorer</span>
        </div>
        <div className="mt-[1px] mr-[5px] flex h-[527px] w-[251px] shrink-0 flex-col border-2 border-[#ccc]">
          <div className="flex h-[21px] items-center pr-[5px] pl-[2px]"><Fit w={57}>Visual Tree</Fit><div className="flex-1" /><svg width="8" height="5" className="mr-[14px]"><path d="M0 0h8L4 5z" fill="#111" /></svg><Pin size={12} strokeWidth={2.500} color="#222" /></div>
          <div className="mx-[2px] flex h-[31px] items-center gap-[14px] border-b-2 border-[#aaa] pl-[6px]"><Target c="#f0973a" /><Magnify s={18} c="#555" w={2.600} /></div>
          <div className="mt-[5px] flex h-[25px] items-center pl-[9px]"><Open /><CodeXml size={17} color="#555" className="mx-[7px]" /><Fit w={44}>Desktop</Fit></div>
          <div className="flex h-[24px] items-center pl-[21px]"><Open /><svg width="16" height="16" viewBox="0 0 16 16" className="mr-[5px] ml-[8px]"><circle cx="8" cy="8" r="7.300" fill="#e8f0fa" stroke="#2c539e" strokeWidth="1.400" /><path d="M3 3l5-1 1 3-3 2 1 3-2 3-2-4zM10 5l4 1-1 5-3-2z" fill="#2c539e" /></svg><Fit w={103}>'iexplore.exe ACME'</Fit></div>
          <div className="mx-[2px] flex h-[25px] items-center bg-[#68a8dc] pl-[31px] font-semibold text-white"><Open /><CodeXml size={17} color="#555" className="mx-[7px]" /><Fit w={155}>'HTML  https://acme-test...'</Fit></div>
          <div className="flex h-[25px] items-center pl-[46px]"><Closed /><CodeXml size={17} color="#555" className="mx-[6px]" /><Fit w={37}>'HEAD'</Fit></div>
          <div className="mx-[2px] flex h-[24px] items-center bg-[#add8e6] pl-[44px]"><Closed /><CodeXml size={17} color="#555" className="mx-[6px]" /><Fit w={36}>'BODY'</Fit></div>
        </div>
        <div className="mt-[1px] flex h-[528px] w-[733px] flex-col">
          <div className="flex h-[20px]">
            <div className="flex w-[90px] items-center border border-b-0 border-[#bbb] pl-[5px]"><Fit w={79}>Selector Editor</Fit></div>
            <div className="flex flex-1 items-center justify-end border-b border-[#bbb] pr-[5px]"><svg width="8" height="9"><path d="M0 0h8v2H0zM0 4h8L4 9z" fill="#111" /></svg></div>
          </div>
          <div className="flex flex-1 flex-col border border-t-0 border-[#bbb] pr-[4px] pl-[3px]">
            <div className="flex h-[329px] border-b-2 border-[#ddd]">
              <div className="flex w-[474px] flex-col overflow-hidden pt-[3px]">
                <div className="flex h-[25px] items-center overflow-hidden bg-[#a6a6a6] pl-[4px]"><Check on /><Fit w={439} className="ml-[11px]">{"<html htmlwindowname='WI-Update' title='ACME System 1 - Work Items' url='http"}</Fit></div>
                <div className="mt-[1px] flex h-[26px] items-center pl-[4px]"><Check on={false} /><Fit w={228} className="ml-[11px]">{"<webctrl css-selector='html' tag='HTML' />"}</Fit></div>
                <div className="flex h-[26px] items-center pl-[4px]"><Check on /><Fit w={126} className="ml-[11px]">{"<webctrl tag='BODY' />"}</Fit></div>
                <div className="flex-1" />
                <Scroll thumb="w-[267px]" end="mr-[7px] mb-[1px] ml-[5px]" />
              </div>
              <div className="flex w-[251px] flex-col border-l-2 border-[#ddd] pt-[4px] pl-[10px]">
                {([["app", 20, "iexplore.exe", 64, false], ["htmlwindownan", 85, "WI-Update", 58, true], ["title", 20, "ACME System 1 - Wo", 111, true], ["url", 13, "https://acme-test.uipa", 112, true]] as [string, number, string, number, boolean][]).map(([a, w, b, v, on]) => (
                  <div key={a} className="flex h-[26px] items-center"><Check on={on} blue={a === "url"} /><div className="flex w-[109px] shrink-0 pl-[13px]"><Fit w={w}>{a}</Fit></div><Fit w={v}>{b}</Fit></div>
                ))}
                <div className="flex-1" />
                <Scroll thumb="w-[118px]" end="mr-[6px] mb-[2px] -ml-[3px]" />
              </div>
            </div>
            <div className="mt-[3px] flex flex-col pl-[1px] leading-[16px] text-[#9b2ca0]">
              <Fit w={722}>{"<html "}<span className="text-[#f22]">htmlwindowname</span><span className="text-[#22f]">='WI-Update' </span><span className="text-[#f22]">title</span><span className="text-[#22f]">='ACME System 1 - Work Items' </span><span className="text-[#f22]">url</span><span className="text-[#22f]">='<span className="underline">https://acme-test.uipath.com/work-items/update/562344</span>'</span></Fit>
              <Fit w={126}>{"<webctrl "}<span className="text-[#f22]">tag</span><span className="text-[#22f]">='BODY'</span>{" />"}</Fit>
            </div>
            <div className="flex-1" />
            <Scroll thumb="w-[673px]" end="mr-[5px] mb-[3px] ml-[5px]" />
          </div>
        </div>
      </div>
      <div className="flex flex-1 items-center pr-[14px] pl-[9px]">
        <div className="flex h-[24px] w-[148px] items-center border border-[#ddd] pl-[4px]"><Fit w={121}>Target Element: 'BODY'</Fit><X size={14} strokeWidth={3} color="#777" className="ml-[6px]" /></div>
        <div className="flex-1" />
        <Fit w={114}>UIAutomation v18.3.2</Fit>
      </div>
      <svg width="12" height="12" className="absolute right-0 bottom-0" fill="#b9bfcb"><path d="M9 0h2v2H9zM9 3h2v2H9zM9 6h2v2H9zM9 9h2v2H9zM6 3h2v2H6zM6 6h2v2H6zM6 9h2v2H6zM3 6h2v2H3zM3 9h2v2H3zM0 9h2v2H0z" /></svg>
    </div>
  );
}

function Reading() {
  return (
    <div className="flex flex-1 flex-col bg-[#212121] pl-[8px]">
      <div className="flex h-[55px] shrink-0 items-center pt-[6px] pl-[12px] text-[18px] font-semibold text-white"><Fit w={444}>Comanda Caserola confirmată pentru data de 22 Jan 2019</Fit></div>
      <div className="flex">
        <div className="flex h-[823px] w-[1302px] flex-col border border-black bg-[#333]">
          <div className="flex h-[41px] shrink-0 items-center border-b border-black pl-[25px] text-[12.500px] text-white">
            <Info size={15} strokeWidth={1.500} />
            <Fit w={131} className="ml-[24px]">Getting too much email?</Fit><Fit w={65} className="ml-[3px] text-[#a9d3fa]">Unsubscribe</Fit>
          </div>
          <div className="flex items-start justify-between pt-[12px] pr-[21px] pl-[12px] text-[#5ea6e0]">
            <div className="flex size-[40px] items-center justify-center rounded-full bg-[#b91c49] text-[15px] text-white">C</div>
            <div className="flex items-center gap-[18px] pt-[10px]">
              <ThumbsUp size={18} strokeWidth={1.500} /><Glyph s={18} d={REPLY} /><Glyph s={18} d={REPLY_ALL} /><ArrowRight size={19} strokeWidth={1.500} />
              <div className="flex gap-[5px]"><i className="size-[2px] bg-current" /><i className="size-[2px] bg-current" /><i className="size-[2px] bg-current" /></div>
            </div>
          </div>
          <div className="flex-1" />
          <div className="flex flex-col items-center pb-[68px] pl-[36px] font-['Liberation_Sans',Arial,sans-serif] text-[12px] leading-[17px] text-[#ccc]">
            <Fit w={327}>Doriţi să vă trimitem mai puţine notificări? Modificaţi setările de aici:</Fit>
            <Fit w={121} className="text-[11px] text-[#dfa0f5] underline">Manage Email Preferences</Fit>
          </div>
        </div>
        <div className="flex flex-1 flex-col items-center pt-[7px] pb-[6px]">
          <Up /><div className="mt-[12px] h-[667px] w-[6px] rounded-full bg-[#c8c8c8]" /><div className="flex-1" /><Down />
        </div>
      </div>
    </div>
  );
}

export default function App() {
  return (
    <div className="flex h-[1080px] w-[3840px] overflow-hidden font-['Open_Sans','Noto_Sans',sans-serif]">
      <AcmeWindow />
      <div className="relative flex h-[1080px] w-[1920px] shrink-0 flex-col">
        <ChromeHeader />
        <OutlookBars />
        <div className="flex h-[880px] shrink-0">
          <Sidebar />
          <MailList />
          <Reading />
        </div>
        <UIExplorer />
        <Taskbar />
      </div>
    </div>
  );
}
